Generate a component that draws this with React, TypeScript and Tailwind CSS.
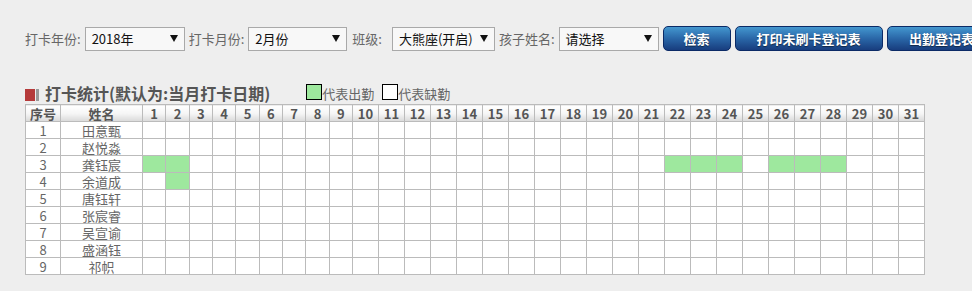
import React from "react";

const FONT = '"Microsoft YaHei", "Noto Sans CJK SC", "Noto Sans", sans-serif';

const names = ["田意甄", "赵悦淼", "龚钰宸", "余道成", "唐钰轩", "张宸睿", "吴宣谕", "盛涵钰", "祁帜"];
const present: Record<number, number[]> = {
  2: [1, 2, 22, 23, 24, 26, 27, 28],
  3: [2],
};
const days = Array.from({ length: 31 }, (_, i) => i + 1);

function Arrow() {
  return (
    <svg width="8" height="7" viewBox="0 0 8 7" className="shrink-0">
      <polygon points="0,0 8,0 4,7" fill="#111" />
    </svg>
  );
}

function FakeSelect({ value, width, ml }: { value: string; width: string; ml: string }) {
  return (
    <div
      className={`${width} ${ml} h-[24px] flex items-center justify-between pl-[6px] pr-[6px] border border-[#a9a9a9] bg-[#f8f8f8] text-[13px] text-[#111] shrink-0`}
    >
      <span>{value}</span>
      <Arrow />
    </div>
  );
}

function Btn({ label, width, ml }: { label: string; width: string; ml: string }) {
  return (
    <div
      className={`${width} ${ml} h-[25px] shrink-0 rounded-[5px] border border-[#0b2a66] bg-gradient-to-b from-[#4497cf] via-[#2a67a8] to-[#183d7e] flex items-center justify-center text-white font-bold text-[13px] [text-shadow:0_1px_1px_rgba(0,0,0,0.5)]`}
    >
      {label}
    </div>
  );
}

export default function App() {
  return (
    <div className="w-full h-screen bg-[#eeeeee] overflow-hidden" style={{ fontFamily: FONT }}>
      <div className="pt-[26px] pl-[25px] flex items-center flex-nowrap whitespace-nowrap text-[13px] text-[#666]">
        <span>打卡年份:</span>
        <FakeSelect value="2018年" width="w-[100px]" ml="ml-[4px]" />
        <span className="ml-[4px]">打卡月份:</span>
        <FakeSelect value="2月份" width="w-[99px]" ml="ml-[4px]" />
        <span className="ml-[5px]">班级:</span>
        <FakeSelect value="大熊座(开启)" width="w-[103px]" ml="ml-[10px]" />
        <span className="ml-[4px]">孩子姓名:</span>
        <FakeSelect value="请选择" width="w-[100px]" ml="ml-[4px]" />
        <Btn label="检索" width="w-[68px]" ml="ml-[4px]" />
        <Btn label="打印未刷卡登记表" width="w-[148px]" ml="ml-[4px]" />
        <Btn label="出勤登记表" width="w-[110px]" ml="ml-[4px]" />
      </div>

      <div className="pl-[25px] mt-[32px] flex items-end h-[21px]">
        <div className="flex items-center self-center mt-[2px]">
          <div className="w-[10px] h-[12px] bg-[#b53a3a]" />
          <div className="w-[3px] h-[12px] bg-[#999] ml-[1px]" />
        </div>
        <span className="ml-[6px] text-[16px] font-bold text-[#555] leading-[21px]">打卡统计(默认为:当月打卡日期)</span>
        <div className="ml-[36px] w-[16px] h-[16px] border border-black bg-[#9ee89e] mb-[4px]" />
        <span className="text-[13px] text-[#666] leading-[18px] mb-[1px]">代表出勤</span>
        <div className="ml-[8px] w-[16px] h-[16px] border border-black bg-white mb-[4px]" />
        <span className="text-[13px] text-[#666] leading-[18px] mb-[1px]">代表缺勤</span>
      </div>

      <div className="pl-[25px]">
        <table className="table-fixed border-collapse w-[899px] bg-white text-[13px]">
          <colgroup>
            <col style={{ width: 35 }} />
            <col style={{ width: 82 }} />
            {days.map((d) => (
              <col key={d} style={{ width: d < 10 ? 23.33 : 26 }} />
            ))}
          </colgroup>
          <thead>
            <tr className="h-[17px]">
              <th className="border border-[#bbb] p-0 font-bold text-[#555] leading-none bg-gradient-to-b from-white via-[#f6f6f6] to-[#d9d9d9]">序号</th>
              <th className="border border-[#bbb] p-0 font-bold text-[#555] leading-none bg-gradient-to-b from-white via-[#f6f6f6] to-[#d9d9d9]">姓名</th>
              {days.map((d) => (
                <th
                  key={d}
                  className="border border-[#bbb] p-0 font-bold text-[#555] leading-none bg-gradient-to-b from-white via-[#f6f6f6] to-[#d9d9d9]"
                >
                  {d}
                </th>
              ))}
            </tr>
          </thead>
          <tbody>
            {names.map((n, i) => (
              <tr key={n} className="h-[17px]">
                <td className="border border-[#bbb] p-0 text-center text-[#666] leading-none">{i + 1}</td>
                <td className="border border-[#bbb] p-0 text-center text-[#666] leading-none">{n}</td>
                {days.map((d) => (
                  <td
                    key={d}
                    className={`border border-[#bbb] p-0 ${present[i]?.includes(d) ? "bg-[#9ee89e]" : ""}`}
                  />
                ))}
              </tr>
            ))}
          </tbody>
        </table>
      </div>
    </div>
  );
}
